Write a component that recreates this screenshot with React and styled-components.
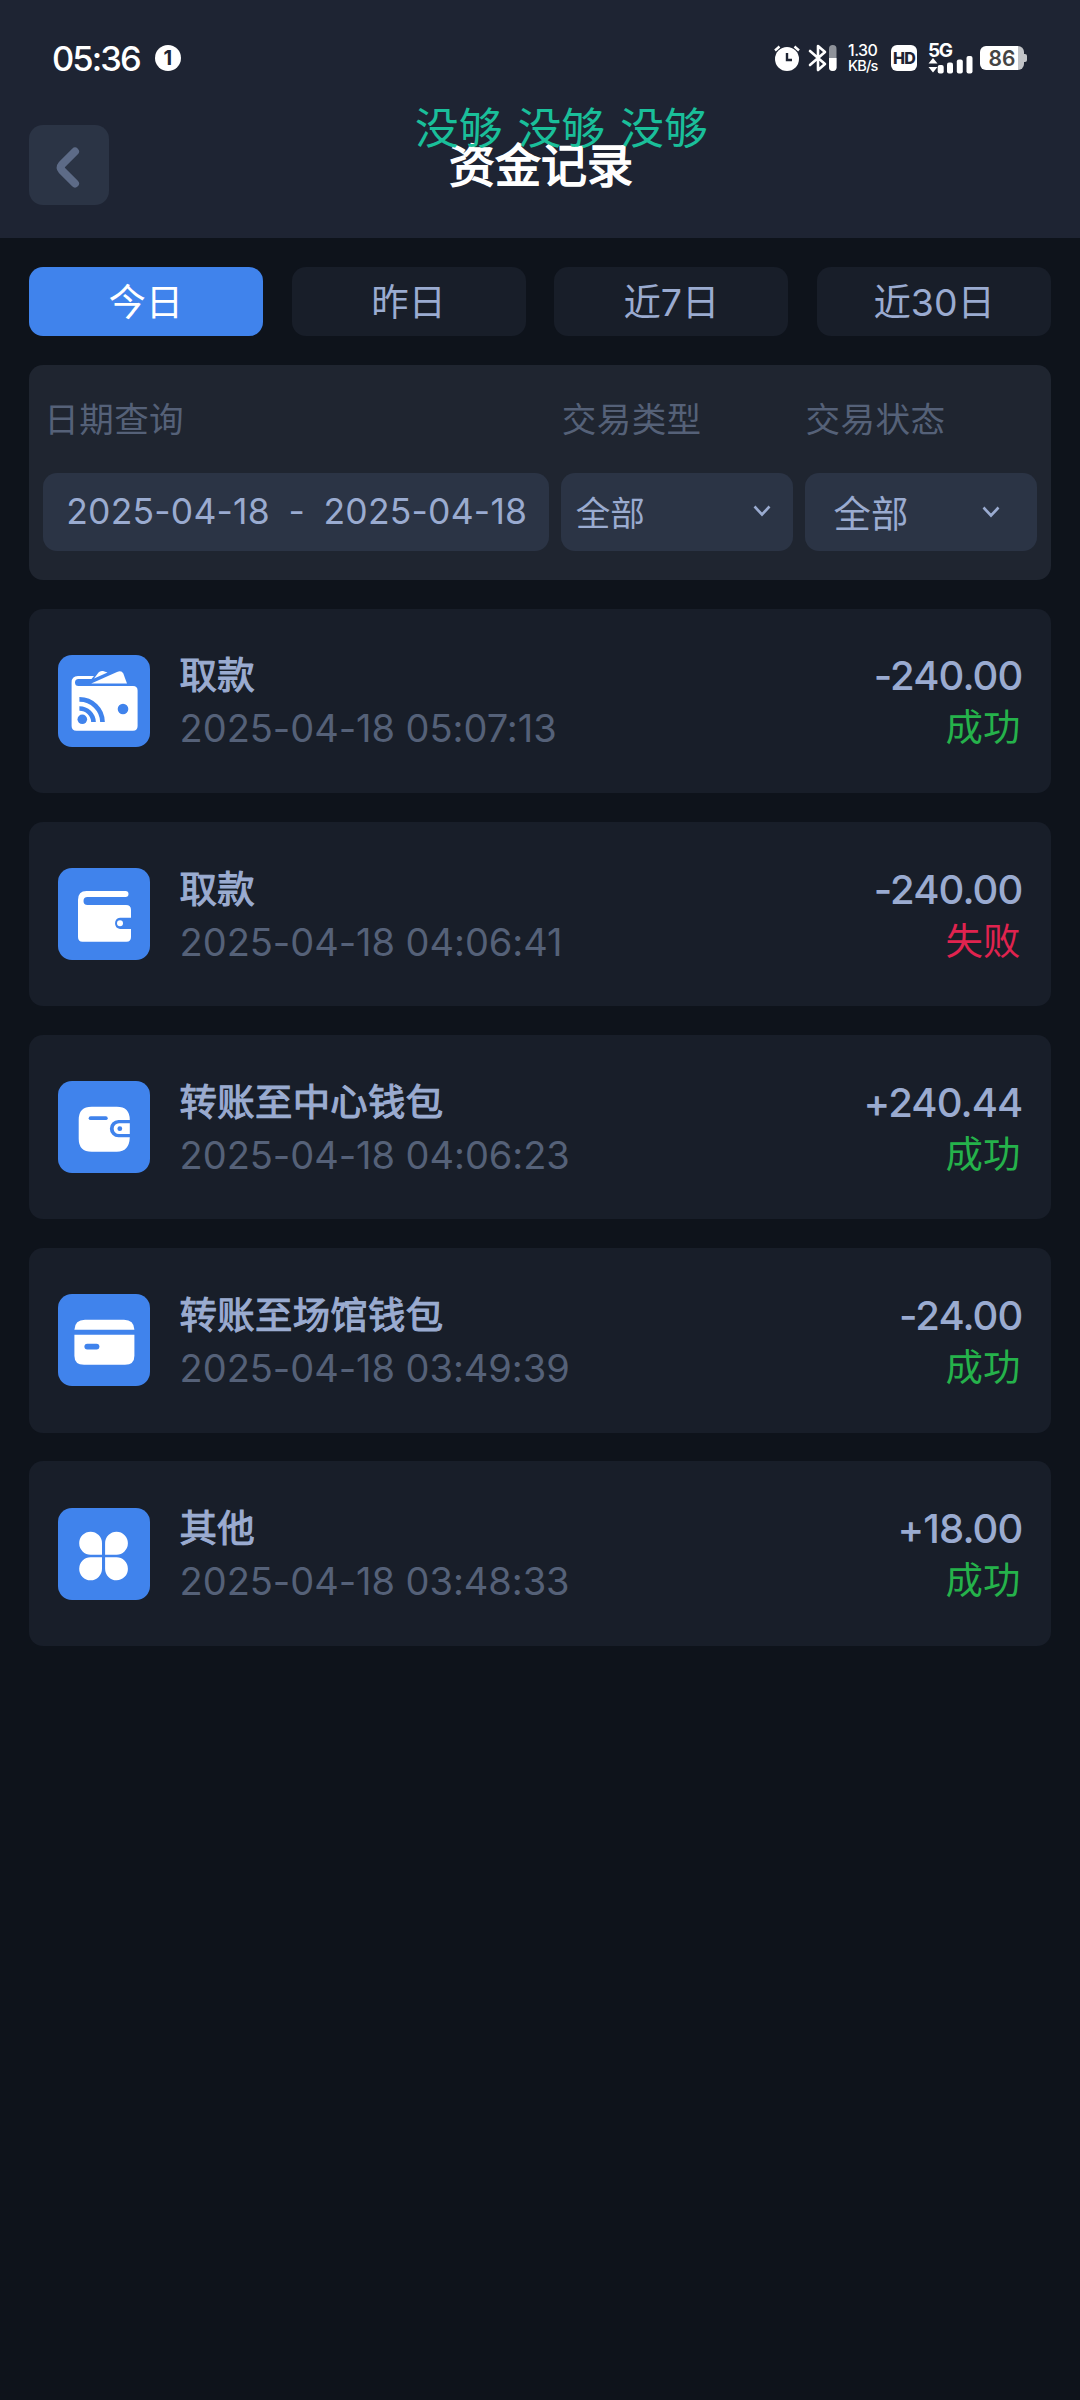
import React from 'react'
import styled, { createGlobalStyle } from 'styled-components';

const App = () => {
  return (
    <Page>
        <GlobalStyle/>
        <TopArea>
            <StatusBar/>
            <TitleBar>
                <BackButton aria-label="返回">
                    <svg width="80" height="80" viewBox="0 0 80 80" fill="none" stroke="#5d6b87" strokeWidth="8" strokeLinecap="round" strokeLinejoin="round">
                        <path d="M46 26.500 L33 39.500 Q30.500 42.500 33 45.500 L46 58.500"/>
                    </svg>
                </BackButton>
                <Title>资金记录</Title>
            </TitleBar>
            <Lyric>没够 没够 没够</Lyric>
        </TopArea>
        <Content>
            <Tabs>
                {tabs.map((tab, i) => <Tab key={tab} $active={i === 0}>{tab}</Tab>)}
            </Tabs>
            <Filters>
                <Field>
                    <Label $indent="1px">日期查询</Label>
                    <DateRange>
                        <span>2025-04-18</span>
                        <i>-</i>
                        <span>2025-04-18</span>
                    </DateRange>
                </Field>
                <Field>
                    <Label>交易类型</Label>
                    <Select>全部<Arrow/></Select>
                </Field>
                <Field>
                    <Label>交易状态</Label>
                    <Select $large>全部<Arrow/></Select>
                </Field>
            </Filters>
            {records.map((item) => (
                <Record key={item.time}>
                    <IconBox>{item.icon}</IconBox>
                    <Info>
                        <Name>{item.name}</Name>
                        <Time>{item.time}</Time>
                    </Info>
                    <Result>
                        <Amount>{item.amount}</Amount>
                        <State $failed={item.failed}>{item.failed ? '失败' : '成功'}</State>
                    </Result>
                </Record>
            ))}
        </Content>
    </Page>
  )
}

export default App;

const StatusBar = () => (
    <Status>
        <Clock>05:36</Clock>
        <Count>1</Count>
        <StatusIcons>
            <svg width="26" height="26" viewBox="0 0 26 26">
                <circle cx="13" cy="14" r="12" fill="#fff"/>
                <path d="M1 5.500 L5.500 1.500 M25 5.500 L20.500 1.500" stroke="#fff" strokeWidth="2.400"/>
                <path d="M13 8 V15 H18" stroke="#1e2433" strokeWidth="2.400" fill="none"/>
            </svg>
            <Bluetooth width="29" height="28" viewBox="0 0 29 28">
                <path d="M2 7 L17 20 L10 26 V2 L17 8 L2 21" stroke="#fff" strokeWidth="2.600" fill="none" strokeLinejoin="round" strokeLinecap="round"/>
                <rect x="21" y="1" width="7.500" height="26" rx="3.700" fill="#8e929a"/>
                <path d="M21 14 H28.500 V23.300 A3.700 3.700 0 0 1 21 23.300 Z" fill="#fff"/>
            </Bluetooth>
            <Speed><b>1.30</b><span>KB/s</span></Speed>
            <Hd>HD</Hd>
            <Signal>
                <b>5G</b>
                <svg width="46" height="18" viewBox="0 0 46 18" fill="#fff">
                    <path d="M0.500 6.500 L5 1 L9.500 6.500 Z M0.500 10 L5 15.500 L9.500 10 Z"/>
                    <rect x="9.700" y="8" width="6" height="8.500" rx="2"/>
                    <rect x="19" y="5.500" width="6" height="11" rx="2"/>
                    <rect x="28.800" y="2.500" width="6" height="14" rx="2"/>
                    <rect x="38.500" y="-1" width="6" height="17.500" rx="2"/>
                </svg>
            </Signal>
            <Battery>86</Battery>
        </StatusIcons>
    </Status>
)

const Arrow = () => (
    <svg width="18" height="12" viewBox="0 0 18 12" fill="none" stroke="#9aabd0" strokeWidth="2.600">
        <path d="M1.500 1.500 L9 9.500 L16.500 1.500"/>
    </svg>
)

const PayWalletIcon = () => (
    <svg viewBox="0 0 92 92" fill="#fff">
        <path d="M20 21 H36 L33.500 24 H20.500 A3.500 3.500 0 0 0 20.500 31 H75 Q79.600 31 79.600 35.500 V71 Q79.600 75.700 75 75.700 H18.500 Q13.600 75.700 13.600 71 V27.500 Q13.600 21 20 21 Z"/>
        <path d="M33.200 28.500 L59 17 Q63.500 15 65.300 18.500 L69 28.500 Z"/>
        <path d="M36 23.500 L40.500 17.500 Q42 15.500 45 16 L49.500 17.500 Z"/>
        <g stroke="#4083ec" strokeWidth="4.700" fill="none">
            <path d="M21.400 44.400 A23 23 0 0 1 44.500 67"/>
            <path d="M21.400 53.500 A14 14 0 0 1 35.500 67"/>
        </g>
        <circle cx="24.300" cy="64.300" r="4.800" fill="#4083ec"/>
        <circle cx="65" cy="54" r="5.300" fill="#4083ec"/>
    </svg>
)

const WalletIcon = () => (
    <svg viewBox="0 0 92 92" fill="#fff">
        <path d="M28.500 23 H67.500 A3 3 0 0 1 67.500 29 H29.500 A4 4 0 0 0 29.500 37 H68 Q73 37 73 42 V49.700 H62 A5.700 5.700 0 0 0 62 61 H73 V69 Q73 73.700 68.500 73.700 H24.500 Q20 73.700 20 69 V32 Q20 23 28.500 23 Z"/>
        <circle cx="62" cy="55.300" r="3"/>
    </svg>
)

const PurseIcon = () => (
    <svg viewBox="0 0 92 92" fill="#fff">
        <path d="M33.700 25.700 H58.800 Q71.800 25.700 71.800 39 H60.500 A8.600 8.600 0 0 0 60.500 56.300 H71.800 Q71.300 70.700 58.800 70.700 H33.700 Q20.700 70.700 20.700 57.700 V38.700 Q20.700 25.700 33.700 25.700 Z"/>
        <path d="M61 42.300 H71.800 V53 H61 A5.300 5.300 0 0 1 61 42.300 Z"/>
        <rect x="30.700" y="35.300" width="19" height="3.800" rx="1.900" fill="#4083ec"/>
        <circle cx="61.800" cy="47.700" r="2.400" fill="#4083ec"/>
    </svg>
)

const CardIcon = () => (
    <svg viewBox="0 0 92 92" fill="#fff">
        <path d="M16.400 35.700 Q16.800 25.700 27 25.700 H66 Q76 25.700 76.400 35.700 Z"/>
        <path d="M16.400 40.700 H76.400 V61.700 Q76.400 70.700 67 70.700 H26 Q16.400 70.700 16.400 61.700 Z"/>
        <rect x="26.400" y="49.700" width="15" height="5.800" rx="2.900" fill="#4083ec"/>
    </svg>
)

const CloverIcon = () => (
    <svg viewBox="0 0 92 92" fill="#fff">
        <path d="M44 46.700 H32.700 A11.400 11.500 0 1 1 44 35.200 Z"/>
        <path d="M47.100 46.700 H58.300 A11.400 11.500 0 1 0 47.100 35.200 Z"/>
        <path d="M44 49.300 H32.700 A11.400 11.500 0 1 0 44 60.800 Z"/>
        <path d="M47.100 49.300 H58.300 A11.400 11.500 0 1 1 47.100 60.800 Z"/>
    </svg>
)

const tabs = ['今日', '昨日', '近7日', '近30日']

const records = [
    { name: '取款', time: '2025-04-18 05:07:13', amount: '-240.00', icon: <PayWalletIcon/> },
    { name: '取款', time: '2025-04-18 04:06:41', amount: '-240.00', failed: true, icon: <WalletIcon/> },
    { name: '转账至中心钱包', time: '2025-04-18 04:06:23', amount: '+240.44', icon: <PurseIcon/> },
    { name: '转账至场馆钱包', time: '2025-04-18 03:49:39', amount: '-24.00', icon: <CardIcon/> },
    { name: '其他', time: '2025-04-18 03:48:33', amount: '+18.00', icon: <CloverIcon/> },
]

const GlobalStyle = createGlobalStyle`
    *{
        box-sizing: border-box;
    }
    body{
        margin: 0;
        background: #0e131b;
        font-family: Inter, 'Noto Sans CJK SC', sans-serif;
    }
    svg{
        display: block;
    }
`
const Page = styled.div`
    min-height: 2400px;
    background: #0e131b;
    color: #9aabd0;
`
const TopArea = styled.div`
    position: relative;
    height: 238px;
    background: #1e2433;
`
const Status = styled.div`
    display: flex;
    align-items: center;
    height: 116px;
    padding: 0 52px;
    color: white;
`
const Clock = styled.div`
    font-size: 34.5px;
    font-weight: 450;
    letter-spacing: -1.9px;
`
const Count = styled.div`
    width: 26px;
    height: 26px;
    margin-left: 15px;
    border-radius: 50%;
    background: white;
    color: #1e2433;
    font-size: 20px;
    font-weight: 700;
    line-height: 26px;
    text-align: center;
`
const StatusIcons = styled.div`
    display: flex;
    align-items: center;
    margin-left: auto;
`
const Bluetooth = styled.svg`
    margin-left: 8px;
`
const Speed = styled.div`
    display: flex;
    flex-direction: column;
    width: 32px;
    margin-left: 11px;
    font-size: 16px;
    line-height: 15px;
    letter-spacing: -0.5px;
    b{
        font-weight: 500;
    }
    span{
        font-size: 14.5px;
        font-weight: 500;
        letter-spacing: -0.8px;
    }
`
const Hd = styled.div`
    width: 26px;
    height: 26px;
    margin-left: 11px;
    border-radius: 6px;
    background: white;
    color: #1e2433;
    font-size: 16px;
    font-weight: 800;
    line-height: 26px;
    letter-spacing: -0.8px;
    text-align: center;
`
const Signal = styled.div`
    display: flex;
    flex-direction: column;
    margin-left: 11px;
    b{
        height: 15px;
        font-size: 19px;
        font-weight: 700;
        line-height: 18px;
        letter-spacing: -1.4px;
    }
    svg{
        overflow: visible;
    }
`
const Battery = styled.div`
    position: relative;
    width: 44px;
    height: 24px;
    margin-left: 6px;
    margin-right: 4px;
    border-radius: 6px;
    background: linear-gradient(90deg, white 38px, #c2c4c8 38px);
    color: #444;
    font-size: 21px;
    font-weight: 600;
    line-height: 25px;
    text-align: center;
    &::after{
        content: '';
        position: absolute;
        top: 8px;
        right: -3px;
        width: 3px;
        height: 8px;
        border-radius: 0 2px 2px 0;
        background: #c2c4c8;
    }
`
const TitleBar = styled.div`
    display: grid;
    grid-template-columns: 80px 1fr 80px;
    align-items: center;
    height: 97px;
    padding: 0 29px;
`
const BackButton = styled.button`
    width: 80px;
    height: 80px;
    padding: 0;
    border: none;
    border-radius: 14px;
    background: #2b3445;
`
const Title = styled.h1`
    margin: 0 0 6px 2px;
    color: white;
    font-size: 46px;
    font-weight: 400;
    text-align: center;
    -webkit-text-stroke: 1.5px white;
`
const Lyric = styled.div`
    position: absolute;
    top: 98px;
    left: 415px;
    color: #1abf9a;
    font-size: 43.7px;
    line-height: 62px;
    word-spacing: 3px;
    white-space: nowrap;
`
const Content = styled.div`
    display: flex;
    flex-direction: column;
    gap: 28.8px;
    padding: 28.8px;
`
const Tabs = styled.div`
    display: grid;
    grid-template-columns: repeat(4, 1fr);
    gap: 28.8px;
`
const Tab = styled.div`
    height: 69.7px;
    border-radius: 14px;
    background: ${({ $active }) => $active ? '#4083ec' : '#181e29'};
    color: ${({ $active }) => $active ? 'white' : '#9aabd0'};
    font-size: 37.4px;
    line-height: 72px;
    text-align: center;
`
const Filters = styled.div`
    display: grid;
    grid-template-columns: 506px 1fr 1fr;
    column-gap: 11.5px;
    height: 214.6px;
    padding: 0 14.4px;
    border-radius: 14px;
    background: #1f2530;
`
const Field = styled.div`
    display: flex;
    flex-direction: column;
`
const Label = styled.div`
    height: 107.6px;
    padding-left: ${({ $indent }) => $indent || '1px'};
    color: #556178;
    font-size: 34.6px;
    line-height: 109px;
    letter-spacing: 0.4px;
`
const Box = styled.div`
    display: flex;
    align-items: center;
    height: 78px;
    border-radius: 14px;
    background: #2b3445;
`
const DateRange = styled(Box)`
    justify-content: space-between;
    padding: 0 22px 0 23px;
    font-size: 35.5px;
    letter-spacing: 0.2px;
    i{
        font-style: normal;
    }
`
const Select = styled(Box)`
    justify-content: space-between;
    padding: ${({ $large }) => $large ? '1px 37px 0 29px' : '0 22px 2px 15px'};
    font-size: ${({ $large }) => $large ? '37.4px' : '34.6px'};
`
const Record = styled.div`
    display: flex;
    align-items: center;
    height: 184.4px;
    padding: 0 28.8px;
    border-radius: 14px;
    background: #181e29;
`
const IconBox = styled.div`
    width: 92px;
    height: 92px;
    border-radius: 14px;
    background: #4083ec;
`
const Info = styled.div`
    flex: 1;
    padding: 3px 0 0 30px;
`
const Name = styled.div`
    font-size: 37.4px;
    line-height: 52px;
    letter-spacing: 0.3px;
    -webkit-text-stroke: 1.1px #9aabd0;
`
const Time = styled.div`
    color: #556178;
    font-size: 38px;
    line-height: 52px;
    letter-spacing: -0.05px;
`
const Result = styled.div`
    padding-top: 3px;
    text-align: right;
`
const Amount = styled.div`
    font-size: 40px;
    font-weight: 500;
    line-height: 52px;
    letter-spacing: -0.9px;
`
const State = styled.div`
    padding-right: 2px;
    color: ${({ $failed }) => $failed ? '#e0234f' : '#25b24b'};
    font-size: 37.4px;
    line-height: 52px;
`
